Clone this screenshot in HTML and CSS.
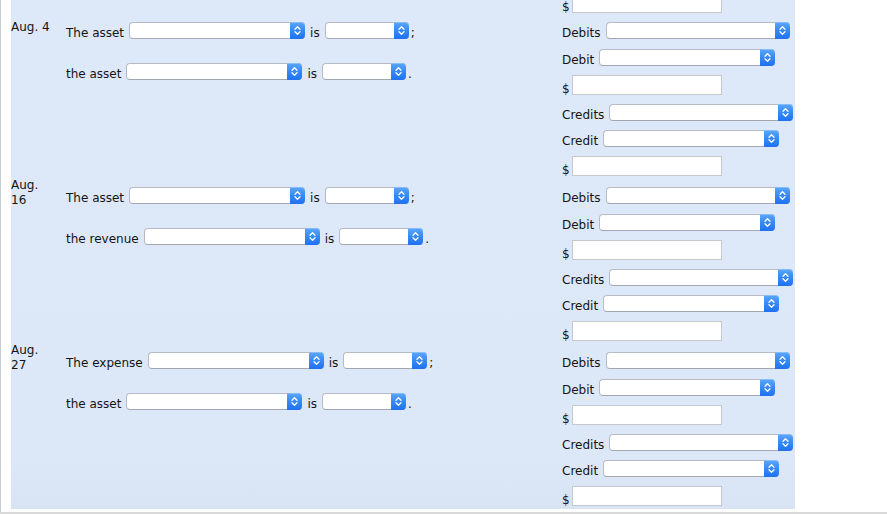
FILE: index.html
```html
<!DOCTYPE html>
<html lang="en">
<head>
<meta charset="utf-8">
<title>Journal entries</title>
<link rel="stylesheet" href="styles.css">
</head>
<body>
<div class="frame">
  <div class="panel">
    <div class="carry">
      <div class="amount"><span class="cur">$</span><span class="inp"></span></div>
    </div>

    <section class="entry">
      <div class="date-cell"><div class="date">Aug. 4</div></div>
      <div class="sentences">
        <div class="line"><span class="lbl">The asset</span><span class="sel w176"><span class="btn"><svg viewBox="0 0 15 17" width="15" height="17"><path d="M5 7.2 7.5 4.7 10 7.2M5 9.8 7.5 12.3 10 9.8"/></svg></span></span><span class="lbl">is</span><span class="tail"><span class="sel w84"><span class="btn"><svg viewBox="0 0 15 17" width="15" height="17"><path d="M5 7.2 7.5 4.7 10 7.2M5 9.8 7.5 12.3 10 9.8"/></svg></span></span><span class="lbl">;</span></span></div>
        <div class="line"><span class="lbl">the asset</span><span class="sel w176"><span class="btn"><svg viewBox="0 0 15 17" width="15" height="17"><path d="M5 7.2 7.5 4.7 10 7.2M5 9.8 7.5 12.3 10 9.8"/></svg></span></span><span class="lbl">is</span><span class="tail"><span class="sel w84"><span class="btn"><svg viewBox="0 0 15 17" width="15" height="17"><path d="M5 7.2 7.5 4.7 10 7.2M5 9.8 7.5 12.3 10 9.8"/></svg></span></span><span class="lbl">.</span></span></div>
      </div>
      <div class="journal">
        <div class="jrow debits"><span class="lbl">Debits</span><span class="sel w184"><span class="btn"><svg viewBox="0 0 15 17" width="15" height="17"><path d="M5 7.2 7.5 4.7 10 7.2M5 9.8 7.5 12.3 10 9.8"/></svg></span></span></div>
        <div class="jrow"><span class="lbl">Debit</span><span class="sel w176"><span class="btn"><svg viewBox="0 0 15 17" width="15" height="17"><path d="M5 7.2 7.5 4.7 10 7.2M5 9.8 7.5 12.3 10 9.8"/></svg></span></span></div>
        <div class="amount"><span class="cur">$</span><span class="inp"></span></div>
        <div class="jrow"><span class="lbl">Credits</span><span class="sel w184"><span class="btn"><svg viewBox="0 0 15 17" width="15" height="17"><path d="M5 7.2 7.5 4.7 10 7.2M5 9.8 7.5 12.3 10 9.8"/></svg></span></span></div>
        <div class="jrow"><span class="lbl">Credit</span><span class="sel w176"><span class="btn"><svg viewBox="0 0 15 17" width="15" height="17"><path d="M5 7.2 7.5 4.7 10 7.2M5 9.8 7.5 12.3 10 9.8"/></svg></span></span></div>
        <div class="amount"><span class="cur">$</span><span class="inp"></span></div>
      </div>
    </section>

    <section class="entry">
      <div class="date-cell"><div class="date">Aug. 16</div></div>
      <div class="sentences">
        <div class="line"><span class="lbl">The asset</span><span class="sel w176"><span class="btn"><svg viewBox="0 0 15 17" width="15" height="17"><path d="M5 7.2 7.5 4.7 10 7.2M5 9.8 7.5 12.3 10 9.8"/></svg></span></span><span class="lbl">is</span><span class="tail"><span class="sel w84"><span class="btn"><svg viewBox="0 0 15 17" width="15" height="17"><path d="M5 7.2 7.5 4.7 10 7.2M5 9.8 7.5 12.3 10 9.8"/></svg></span></span><span class="lbl">;</span></span></div>
        <div class="line"><span class="lbl">the revenue</span><span class="sel w176"><span class="btn"><svg viewBox="0 0 15 17" width="15" height="17"><path d="M5 7.2 7.5 4.7 10 7.2M5 9.8 7.5 12.3 10 9.8"/></svg></span></span><span class="lbl">is</span><span class="tail"><span class="sel w84"><span class="btn"><svg viewBox="0 0 15 17" width="15" height="17"><path d="M5 7.2 7.5 4.7 10 7.2M5 9.8 7.5 12.3 10 9.8"/></svg></span></span><span class="lbl">.</span></span></div>
      </div>
      <div class="journal">
        <div class="jrow debits"><span class="lbl">Debits</span><span class="sel w184"><span class="btn"><svg viewBox="0 0 15 17" width="15" height="17"><path d="M5 7.2 7.5 4.7 10 7.2M5 9.8 7.5 12.3 10 9.8"/></svg></span></span></div>
        <div class="jrow"><span class="lbl">Debit</span><span class="sel w176"><span class="btn"><svg viewBox="0 0 15 17" width="15" height="17"><path d="M5 7.2 7.5 4.7 10 7.2M5 9.8 7.5 12.3 10 9.8"/></svg></span></span></div>
        <div class="amount"><span class="cur">$</span><span class="inp"></span></div>
        <div class="jrow"><span class="lbl">Credits</span><span class="sel w184"><span class="btn"><svg viewBox="0 0 15 17" width="15" height="17"><path d="M5 7.2 7.5 4.7 10 7.2M5 9.8 7.5 12.3 10 9.8"/></svg></span></span></div>
        <div class="jrow"><span class="lbl">Credit</span><span class="sel w176"><span class="btn"><svg viewBox="0 0 15 17" width="15" height="17"><path d="M5 7.2 7.5 4.7 10 7.2M5 9.8 7.5 12.3 10 9.8"/></svg></span></span></div>
        <div class="amount"><span class="cur">$</span><span class="inp"></span></div>
      </div>
    </section>

    <section class="entry">
      <div class="date-cell"><div class="date">Aug. 27</div></div>
      <div class="sentences">
        <div class="line"><span class="lbl">The expense</span><span class="sel w176"><span class="btn"><svg viewBox="0 0 15 17" width="15" height="17"><path d="M5 7.2 7.5 4.7 10 7.2M5 9.8 7.5 12.3 10 9.8"/></svg></span></span><span class="lbl">is</span><span class="tail"><span class="sel w84"><span class="btn"><svg viewBox="0 0 15 17" width="15" height="17"><path d="M5 7.2 7.5 4.7 10 7.2M5 9.8 7.5 12.3 10 9.8"/></svg></span></span><span class="lbl">;</span></span></div>
        <div class="line"><span class="lbl">the asset</span><span class="sel w176"><span class="btn"><svg viewBox="0 0 15 17" width="15" height="17"><path d="M5 7.2 7.5 4.7 10 7.2M5 9.8 7.5 12.3 10 9.8"/></svg></span></span><span class="lbl">is</span><span class="tail"><span class="sel w84"><span class="btn"><svg viewBox="0 0 15 17" width="15" height="17"><path d="M5 7.2 7.5 4.7 10 7.2M5 9.8 7.5 12.3 10 9.8"/></svg></span></span><span class="lbl">.</span></span></div>
      </div>
      <div class="journal">
        <div class="jrow debits"><span class="lbl">Debits</span><span class="sel w184"><span class="btn"><svg viewBox="0 0 15 17" width="15" height="17"><path d="M5 7.2 7.5 4.7 10 7.2M5 9.8 7.5 12.3 10 9.8"/></svg></span></span></div>
        <div class="jrow"><span class="lbl">Debit</span><span class="sel w176"><span class="btn"><svg viewBox="0 0 15 17" width="15" height="17"><path d="M5 7.2 7.5 4.7 10 7.2M5 9.8 7.5 12.3 10 9.8"/></svg></span></span></div>
        <div class="amount"><span class="cur">$</span><span class="inp"></span></div>
        <div class="jrow"><span class="lbl">Credits</span><span class="sel w184"><span class="btn"><svg viewBox="0 0 15 17" width="15" height="17"><path d="M5 7.2 7.5 4.7 10 7.2M5 9.8 7.5 12.3 10 9.8"/></svg></span></span></div>
        <div class="jrow"><span class="lbl">Credit</span><span class="sel w176"><span class="btn"><svg viewBox="0 0 15 17" width="15" height="17"><path d="M5 7.2 7.5 4.7 10 7.2M5 9.8 7.5 12.3 10 9.8"/></svg></span></span></div>
        <div class="amount"><span class="cur">$</span><span class="inp"></span></div>
      </div>
    </section>
  </div>
</div>
<div class="bottom"></div>
</body>
</html>
```
FILE: styles.css
```css
html, body {
  margin: 0;
  padding: 0;
  background: #ffffff;
  overflow: hidden;
}

body {
  font-family: "DejaVu Sans", Verdana, sans-serif;
  font-size: 12px;
  color: #141414;
}

.frame {
  height: 512px;
  box-sizing: border-box;
  border-left: 1px solid #c7cdd9;
}

.panel {
  margin-left: 10px;
  width: 784px;
  height: 509px;
  overflow: hidden;
  background: linear-gradient(#dde8f8 0, #dce7f7 460px, #d8e3f4 509px);
}

.bottom {
  height: 2px;
  background: #d9d9d9;
}

.carry,
.entry {
  display: grid;
  grid-template-columns: 55px 496px 233px;
}

.carry {
  margin-top: -7px;
  margin-bottom: 9px;
}

.carry .amount {
  grid-column: 3;
  margin: 0;
}

/* date column */
.date-cell {
  height: 17px;
  display: flex;
  align-items: center;
}

.date {
  width: 44px;
  line-height: 15px;
  padding-bottom: 6px;
}

/* sentence column */
.line {
  display: flex;
  align-items: flex-end;
  gap: 5px;
  height: 17px;
}

.line + .line {
  margin-top: 24px;
}

.tail {
  display: flex;
  align-items: flex-end;
  gap: 2px;
}

.lbl {
  line-height: 12px;
  white-space: nowrap;
}

/* journal column */
.jrow {
  display: flex;
  align-items: flex-end;
  gap: 5px;
  height: 17px;
  margin-bottom: 9px;
}

.jrow.debits {
  margin-bottom: 10px;
}

.amount {
  display: flex;
  align-items: flex-end;
  gap: 2px;
  height: 20px;
  margin-bottom: 9px;
}

.journal .amount:last-child {
  margin-bottom: 11px;
}

.cur {
  line-height: 12px;
}

.inp {
  display: block;
  width: 150px;
  height: 20px;
  box-sizing: border-box;
  border: 1px solid #c6c8cd;
  background: #ffffff;
}

/* mac-style select */
.sel {
  display: flex;
  flex: none;
  height: 17px;
  box-sizing: border-box;
  border: 1px solid #b7bbc3;
  border-bottom-color: #a3a7af;
  border-right: 0;
  border-radius: 4px;
  background: #ffffff;
}

.w176 { width: 176px; }
.w184 { width: 184px; }
.w84 { width: 84px; }

.btn {
  display: flex;
  width: 15px;
  margin: -1px 0 -1px auto;
  border-radius: 0 4px 4px 0;
  background: linear-gradient(#5ea8fb, #3a8cf7 45%, #1f71f2);
  box-shadow: inset 0 1px 0 rgba(255, 255, 255, 0.25);
}

.btn svg {
  display: block;
  fill: none;
  stroke: #ffffff;
  stroke-width: 1.3;
  stroke-linecap: round;
  stroke-linejoin: round;
}
```
